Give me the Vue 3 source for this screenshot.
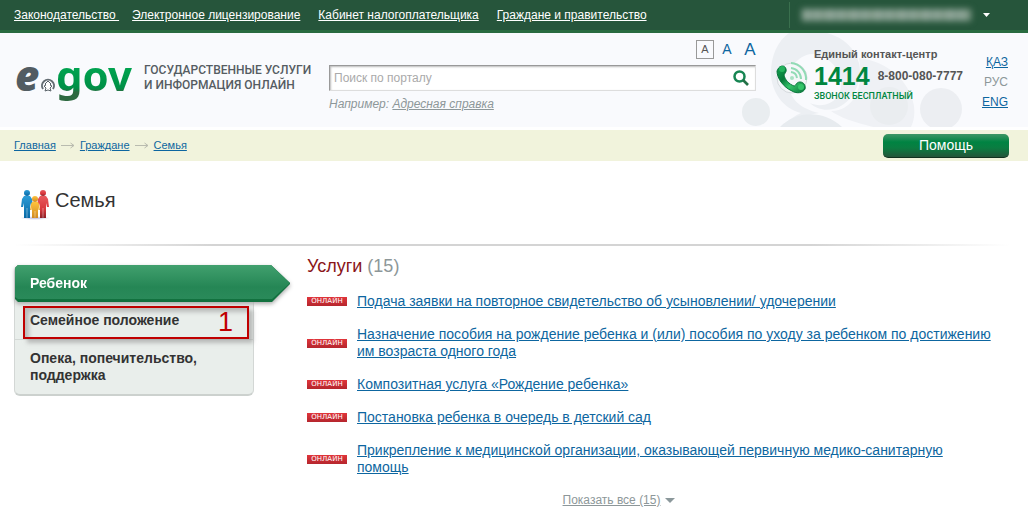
<script setup>
const topLinks = [
  'Законодательство\u00a0',
  'Электронное лицензирование',
  'Кабинет налогоплательщика',
  'Граждане и правительство',
]
const crumbs = ['Главная', 'Граждане', 'Семья']
const services = [
  'Подача заявки на повторное свидетельство об усыновлении/ удочерении',
  'Назначение пособия на рождение ребенка и (или) пособия по уходу за ребенком по достижению им возраста одного года',
  'Композитная услуга «Рождение ребенка»',
  'Постановка ребенка в очередь в детский сад',
  'Прикрепление к медицинской организации, оказывающей первичную медико-санитарную помощь',
]
</script>

<template>
  <div class="page">
    <nav class="topbar">
      <a v-for="link in topLinks" :key="link" href="#">{{ link }}</a>
      <button class="account" type="button" aria-label="Аккаунт">
        <span class="account-name"></span>
        <svg width="7" height="4" viewBox="0 0 7 4"><path d="M0 0h7L3.500 4z" fill="#fff" /></svg>
      </button>
    </nav>

    <header class="header">
      <svg class="swirl" width="230" height="94" viewBox="0 0 230 94">
        <path d="M48 0H86C104 5 114 16 118 30C122 47 113 67 98 74C88 79 76 77 69 70C80 75 93 71 98 61C105 46 94 27 77 21C60 19 47 33 47 49C48 66 60 76 78 80C58 83 47 88 38 94C48 87 55 82 60 80C42 76 30 58 30 40C30 22 37 8 48 0Z" fill="#eceff3" />
        <path d="M39 94C56 77 83 77 101 94Z" fill="#e7ebef" />
        <path d="M118 25C146 28 169 48 173 73C174 81 173 88 170 94H132C112 89 98 84 90 78C112 78 124 55 118 25Z" fill="#eff1f5" />
        <circle cx="15" cy="79" r="14" fill="#e9edf0" />
        <circle cx="148" cy="73" r="19" fill="#eaedf0" />
        <circle cx="200" cy="76" r="21" fill="#eceef2" />
      </svg>
      <a class="logo" href="#"><span class="logo-e">e</span><svg width="16" height="16" viewBox="0 0 16 16"><path d="M3 12A6 6 0 1 1 13 12" fill="none" stroke="#646d73" stroke-width="2" /><path d="M8 4L11 7L10 8L12 9L10 11L11 14L8 13L5 14L6 11L4 9L6 8L5 7Z" fill="#fff" stroke="#596268" stroke-width="1" /></svg><span class="logo-gov">gov</span></a>
      <div class="slogan">ГОСУДАРСТВЕННЫЕ УСЛУГИ<br />И ИНФОРМАЦИЯ ОНЛАЙН</div>

      <form class="search" @submit.prevent>
        <div class="sizes">
          <button class="size small" type="button">A</button>
          <button class="size medium" type="button">A</button>
          <button class="size large" type="button">A</button>
        </div>
        <div class="field">
          <input type="text" placeholder="Поиск по порталу" aria-label="Поиск по порталу" />
          <button type="submit" aria-label="Найти">
            <svg width="16" height="16" viewBox="0 0 16 16"><circle cx="6.500" cy="6.500" r="5" fill="none" stroke="#168552" stroke-width="2.500" /><path d="M10 10l5 5" stroke="#237146" stroke-width="2.600" /></svg>
          </button>
        </div>
        <p class="example">Например: <a href="#">Адресная справка</a></p>
      </form>

      <div class="contact">
        <svg class="phone" width="34" height="36" viewBox="0 0 34 36">
          <defs>
            <linearGradient id="handset" x1="0" y1="0" x2="1" y2="1"><stop offset="0" stop-color="#12a44f" /><stop offset=".35" stop-color="#07793a" /><stop offset=".6" stop-color="#35c56a" /><stop offset="1" stop-color="#087138" /></linearGradient>
          </defs>
          <circle cx="16" cy="17" r="15" fill="#f5f7f9" stroke="#d5dadd" />
          <g fill="none" stroke="#91dbb5" stroke-width="2"><path d="M15 2A16 16 0 0 1 30 19" /><path d="M15 7A11 11 0 0 1 25 18" /><path d="M15 11A7 7 0 0 1 21 17" /></g>
          <circle cx="16" cy="17" r="2" fill="#a9e2c4" />
          <path d="M2 8C4 4 9 4 10 8C11 11 8 13 8 14C9 19 13 23 18 25C20 25 20 21 24 21C28 21 30 25 29 28C27 32 21 33 16 30C7 26 1 17 1 10Z" fill="url(#handset)" stroke="#07753a" />
          <circle cx="6" cy="8" r="3" fill="#25b35d" /><circle cx="25" cy="26" r="3" fill="#35c56a" />
        </svg>
        <div class="contact-text">
          <div class="contact-title">Единый контакт-центр</div>
          <div class="numbers"><strong>1414</strong><b>8-800-080-7777</b></div>
          <div class="free">ЗВОНОК БЕСПЛАТНЫЙ</div>
        </div>
      </div>

      <nav class="langs">
        <a href="#">ҚАЗ</a>
        <span>РУС</span>
        <a href="#">ENG</a>
      </nav>
    </header>

    <div class="crumbbar">
      <nav class="crumbs">
        <template v-for="(crumb, i) in crumbs" :key="crumb">
          <svg v-if="i" width="14" height="7" viewBox="0 0 14 7"><path d="M0 3.500H13M9.500 1L13 3.500L9.500 6" fill="none" stroke="#b9bbaf" /></svg>
          <a href="#">{{ crumb }}</a>
        </template>
      </nav>
      <button class="help" type="button">Помощь</button>
    </div>

    <div class="title">
      <svg width="32" height="32" viewBox="0 0 32 32">
        <defs>
          <linearGradient id="man" x1="0" y1="0" x2="0" y2="1"><stop offset="0" stop-color="#2b9bd6" /><stop offset="1" stop-color="#0768a5" /></linearGradient>
          <linearGradient id="woman" x1="0" y1="0" x2="0" y2="1"><stop offset="0" stop-color="#e85a5e" /><stop offset=".6" stop-color="#d8373d" /><stop offset="1" stop-color="#8d2026" /></linearGradient>
          <linearGradient id="child" x1="0" y1="0" x2="0" y2="1"><stop offset="0" stop-color="#ffc33d" /><stop offset="1" stop-color="#d18a22" /></linearGradient>
          <radialGradient id="shade"><stop offset="0" stop-color="#b9b9dc" /><stop offset="1" stop-color="#fff" /></radialGradient>
        </defs>
        <ellipse cx="16" cy="29" rx="15" ry="2" fill="url(#shade)" />
        <g fill="url(#man)"><circle cx="8" cy="4" r="3" /><path d="M5 7h6l2 3 1 8h-2L11 14V29H8.200V19h-.4V29H5V14L4 18H2L3 10Z" /></g>
        <g fill="url(#woman)"><circle cx="24" cy="4" r="3" /><path d="M21 7h6l2 3 1 8h-2L27 14V29H24.200V19h-.4V29H21V14L20 18H18L19 10Z" /></g>
        <g fill="url(#child)"><circle cx="16" cy="10" r="3" /><path d="M13 13h6l1 2 1 6h-1.500L19 18V29H16.200V22h-.4V29H13V18L12.500 21H11L12 15Z" /></g>
      </svg>
      <h1>Семья</h1>
    </div>
    <div class="divider"></div>

    <main class="main">
      <aside class="menu">
        <a class="active" href="#">
          <svg class="ribbon" width="275" height="37" viewBox="0 0 275 37">
            <defs><linearGradient id="ribbon" x1="0" y1="0" x2="0" y2="1"><stop offset="0" stop-color="#41a06e" /><stop offset=".65" stop-color="#258655" /><stop offset="1" stop-color="#2a8a5a" /></linearGradient></defs>
            <path d="M3 0H256L275 18V19L257 37H3L0 34V3Z" fill="#12713f" />
            <path d="M3 0H256L275 18L257 34H3L0 32V3Z" fill="url(#ribbon)" />
          </svg>
          <span>Ребенок</span>
        </a>
        <a class="item" href="#">Семейное положение</a>
        <a class="item last" href="#">Опека, попечительство, поддержка</a>
        <div class="marker">1</div>
      </aside>

      <section class="services">
        <h2>Услуги <span>(15)</span></h2>
        <ul>
          <li v-for="service in services" :key="service">
            <span class="badge">онлайн</span>
            <a href="#">{{ service }}</a>
          </li>
        </ul>
        <div class="more">
          <a href="#">Показать все (15)</a>
          <svg width="10" height="5" viewBox="0 0 10 5"><path d="M0 0h10L5 5z" fill="#8b989b" /></svg>
        </div>
      </section>
    </main>
  </div>
</template>

<style>
body { background: #fff; }
</style>

<style scoped>
.page { font-family: "Liberation Sans", Arial, sans-serif; font-size: 12px; color: #333; }
.page * { box-sizing: border-box; }
a { color: #0d66a0; }
button { font-family: inherit; padding: 0; border: 0; background: none; cursor: pointer; }
svg { display: block; flex: none; }
.topbar { display: flex; align-items: center; gap: 18px; height: 33px; padding: 0 38px 0 14px; background: #26553b; border-bottom: 3px solid #296b40; }
.topbar a { color: #fff; line-height: 14px; }
.topbar a:first-child { margin-right: -5px; }
.account { display: flex; align-items: center; gap: 12px; height: 26px; margin-left: auto; padding-left: 12px; border-left: 1px solid #3a704e; }
.account-name { width: 169px; height: 12px; background: repeating-linear-gradient(90deg, #94a99c 0 7px, #7b9686 7px 10px, #8ba294 10px 21px, #76927f 21px 24px); filter: blur(3px); }
.header { position: relative; display: flex; align-items: flex-start; height: 94px; padding: 0 20px 0 15px; background: #f9fafd; }
.header > * { position: relative; }
.header .swirl { position: absolute; right: 57px; top: 0; }
.logo { display: flex; width: 129px; margin-top: 12px; text-decoration: none; font: 800 42px/60px "Noto Sans", sans-serif; }
.logo svg { margin: 32px 0 0; }
.logo-e { width: 25px; color: #525c62; font-family: "Open Sans", sans-serif; font-style: italic; }
.logo-gov { font-weight: 700; background: linear-gradient(#00a651 20px, #008f46 43px, #2d6940 47px); background-clip: text; color: transparent; }
.slogan { width: 185px; margin-top: 30px; font: 500 12px/15px Roboto, sans-serif; color: #555c62; white-space: nowrap; }
.search { flex: 1; padding-top: 7px; }
.sizes { display: flex; justify-content: flex-end; align-items: center; gap: 8px; height: 19px; }
.size { color: #0d66a0; line-height: 17px; }
.size.small { width: 18px; height: 19px; border: 1px solid #999; color: #555; font-size: 11px; }
.size.medium { font-size: 14px; width: 10px; }
.size.large { font-size: 17px; width: 12px; margin-left: 4px; }
.field { display: flex; align-items: center; height: 26px; margin-top: 6px; padding-right: 6px; border: 1px solid #ddd; border-top: 1px solid #999; border-left: 1px solid #999; background: #fff; box-shadow: inset 1px 1px 2px #bbb; }
.field input { flex: 1; min-width: 0; height: 22px; padding: 0 4px; border: 0; outline: 0; background: none; font: 12px "Liberation Sans", sans-serif; }
.field input::placeholder { color: #aaa; opacity: 1; }
.example { margin: 6px 0 0; line-height: 14px; font-style: italic; color: #8d9799; }
.example a { color: inherit; }
.contact { display: flex; width: 206px; margin-left: 20px; padding-top: 13px; }
.phone { margin: 15px 4px 0 0; }
.contact-text { font-weight: bold; color: #555; white-space: nowrap; }
.contact-title { font-size: 11px; line-height: 16px; }
.numbers { display: flex; align-items: center; gap: 8px; height: 28px; }
.numbers strong { font-size: 25px; color: #00863f; }
.numbers b { font-size: 12px; }
.free { font: 500 9px/13px Roboto, sans-serif; color: #00863f; }
.langs { display: flex; flex-direction: column; align-items: flex-end; width: 26px; padding-top: 19px; line-height: 20px; color: #8d9799; }
.crumbbar { display: flex; align-items: center; justify-content: space-between; height: 31px; margin-top: 3px; padding: 0 19px 0 14px; background: #f1f3dc; }
.crumbs { display: flex; align-items: center; gap: 5px; font-size: 11px; line-height: 13px; }
.help { width: 126px; height: 24px; border-radius: 5px; border-bottom: 1px solid #12311f; background: linear-gradient(#3f9667, #008342 35%, #0a7d41 60%, #24553a); color: #fff; font-size: 14px; line-height: 22px; }
.title { display: flex; gap: 4px; height: 83px; padding: 28px 0 0 19px; }
.title h1 { margin: 0; font-weight: 400; font-size: 20px; line-height: 23px; }
.divider { height: 2px; margin: 0 18px 0 14px; background: linear-gradient(90deg, #fff, #d4d4d4 20%, #d4d4d4 80%, #fff); }
.main { display: grid; grid-template-columns: 240px 1fr; column-gap: 53px; align-items: start; padding: 8px 19px 0 14px; }
.menu { position: relative; margin-top: 11px; border: 1px solid #d3d7d5; border-top: 0; border-bottom: 2px solid #ccd1ce; border-radius: 6px; background: #e9eeeb; font-size: 14px; font-weight: bold; }
.menu a { display: block; padding: 0 15px; color: #333; text-decoration: none; line-height: 17px; }
.menu .active { position: relative; height: 37px; line-height: 36px; color: #fff; filter: drop-shadow(0 2px 2px #aaa); }
.active span { position: relative; }
.ribbon { position: absolute; left: 0; top: 0; }
.menu .item { padding-top: 10px; padding-bottom: 10px; border-bottom: 1px solid #d4d9d6; }
.menu .last { border-bottom: 0; }
.marker { position: absolute; left: 8px; top: 41px; width: 226px; height: 33px; padding-right: 14px; border: 2px solid #c00000; color: #c00000; font-size: 27px; font-weight: 400; line-height: 28px; text-align: right; box-shadow: 4px 4px 4px #9999, inset 4px 4px 4px #9999; }
.services h2 { margin: 0; font-size: 18px; line-height: 24px; font-weight: 400; color: #8a1519; }
.services h2 span { color: #8d9799; }
.services ul { list-style: none; margin: 15px 0 0; padding: 0 14px 0 0; display: grid; gap: 16px; }
.services li { display: flex; align-items: center; gap: 10px; font-size: 14px; line-height: 17px; }
.badge { flex: none; width: 40px; height: 9px; background: linear-gradient(#e0353b, #b5262d); color: #fff; font: 7px/9px "DejaVu Sans", sans-serif; text-transform: uppercase; text-align: center; }
.more { display: flex; justify-content: center; align-items: center; gap: 5px; margin-top: 17px; padding-right: 78px; line-height: 14px; }
.more a { color: #8d9799; }
</style>
